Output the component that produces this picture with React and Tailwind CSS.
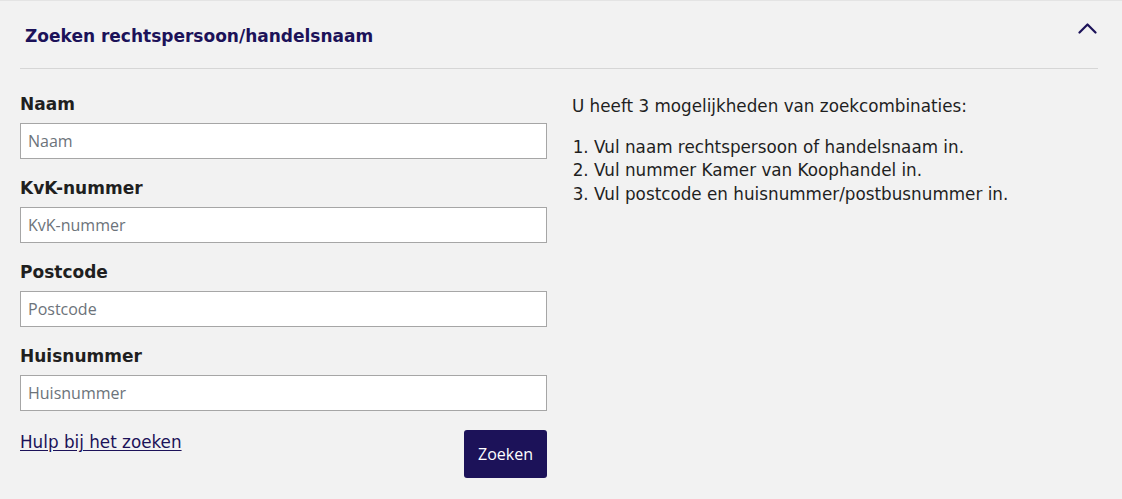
import React from 'react';

const fields = ['Naam', 'KvK-nummer', 'Postcode', 'Huisnummer'];

const steps = [
    'Vul naam rechtspersoon of handelsnaam in.',
    'Vul nummer Kamer van Koophandel in.',
    'Vul postcode en huisnummer/postbusnummer in.',
];

const App = () => {
    return (
        <div className="min-h-[499px] bg-[#f2f2f2] border-t border-[#e4e4e4] font-['DejaVu_Sans',Verdana,sans-serif] text-[#1f1f1f]">
            {/* header */}
            <div className="ml-5 mr-6 h-[68px] flex items-center justify-between border-b border-[#d6d6d6]">
                <h2 className="pl-[5px] mt-[4px] text-[17px] font-bold text-[#1c1259]">Zoeken rechtspersoon/handelsnaam</h2>
                <button className="mr-[1px] mb-[12px] text-[#1c1259]">
                    <svg width="19" height="11" viewBox="0 0 19 11" fill="none" stroke="currentColor" strokeWidth="2.2" strokeLinecap="round" strokeLinejoin="round">
                        <polyline points="1.5,9.5 9.5,1.5 17.5,9.5" />
                    </svg>
                </button>
            </div>

            <div className="mx-5 pt-[25px] flex gap-[25px]">
                {/* form */}
                <div className="w-[527px] shrink-0">
                    {fields.map((f) => (
                        <div key={f} className="mb-[19px]">
                            <label className="block text-[17px] font-bold leading-[20px] mb-[9px]">{f}</label>
                            <input
                                placeholder={f}
                                className="w-full h-[36px] bg-white border border-[#a6a6a6] px-[7px] text-[16px] font-['Open_Sans',sans-serif] placeholder:text-[#6c737a] outline-none"
                            />
                        </div>
                    ))}
                    <div className="flex justify-between items-start">
                        <a href="#" className="text-[16.8px] text-[#1c1259] underline underline-offset-2">Hulp bij het zoeken</a>
                        <button className="w-[83px] h-[48px] rounded-[3px] bg-[#1c1259] text-white text-[16px] font-['Open_Sans',sans-serif]">
                            Zoeken
                        </button>
                    </div>
                </div>

                {/* info */}
                <div className="pt-px text-[16.8px] leading-[23.5px]">
                    <p className="mb-[17px]">U heeft 3 mogelijkheden van zoekcombinaties:</p>
                    <ol className="list-decimal pl-[22px]">
                        {steps.map((s) => (
                            <li key={s}>{s}</li>
                        ))}
                    </ol>
                </div>
            </div>
        </div>
    );
};

export default App;
